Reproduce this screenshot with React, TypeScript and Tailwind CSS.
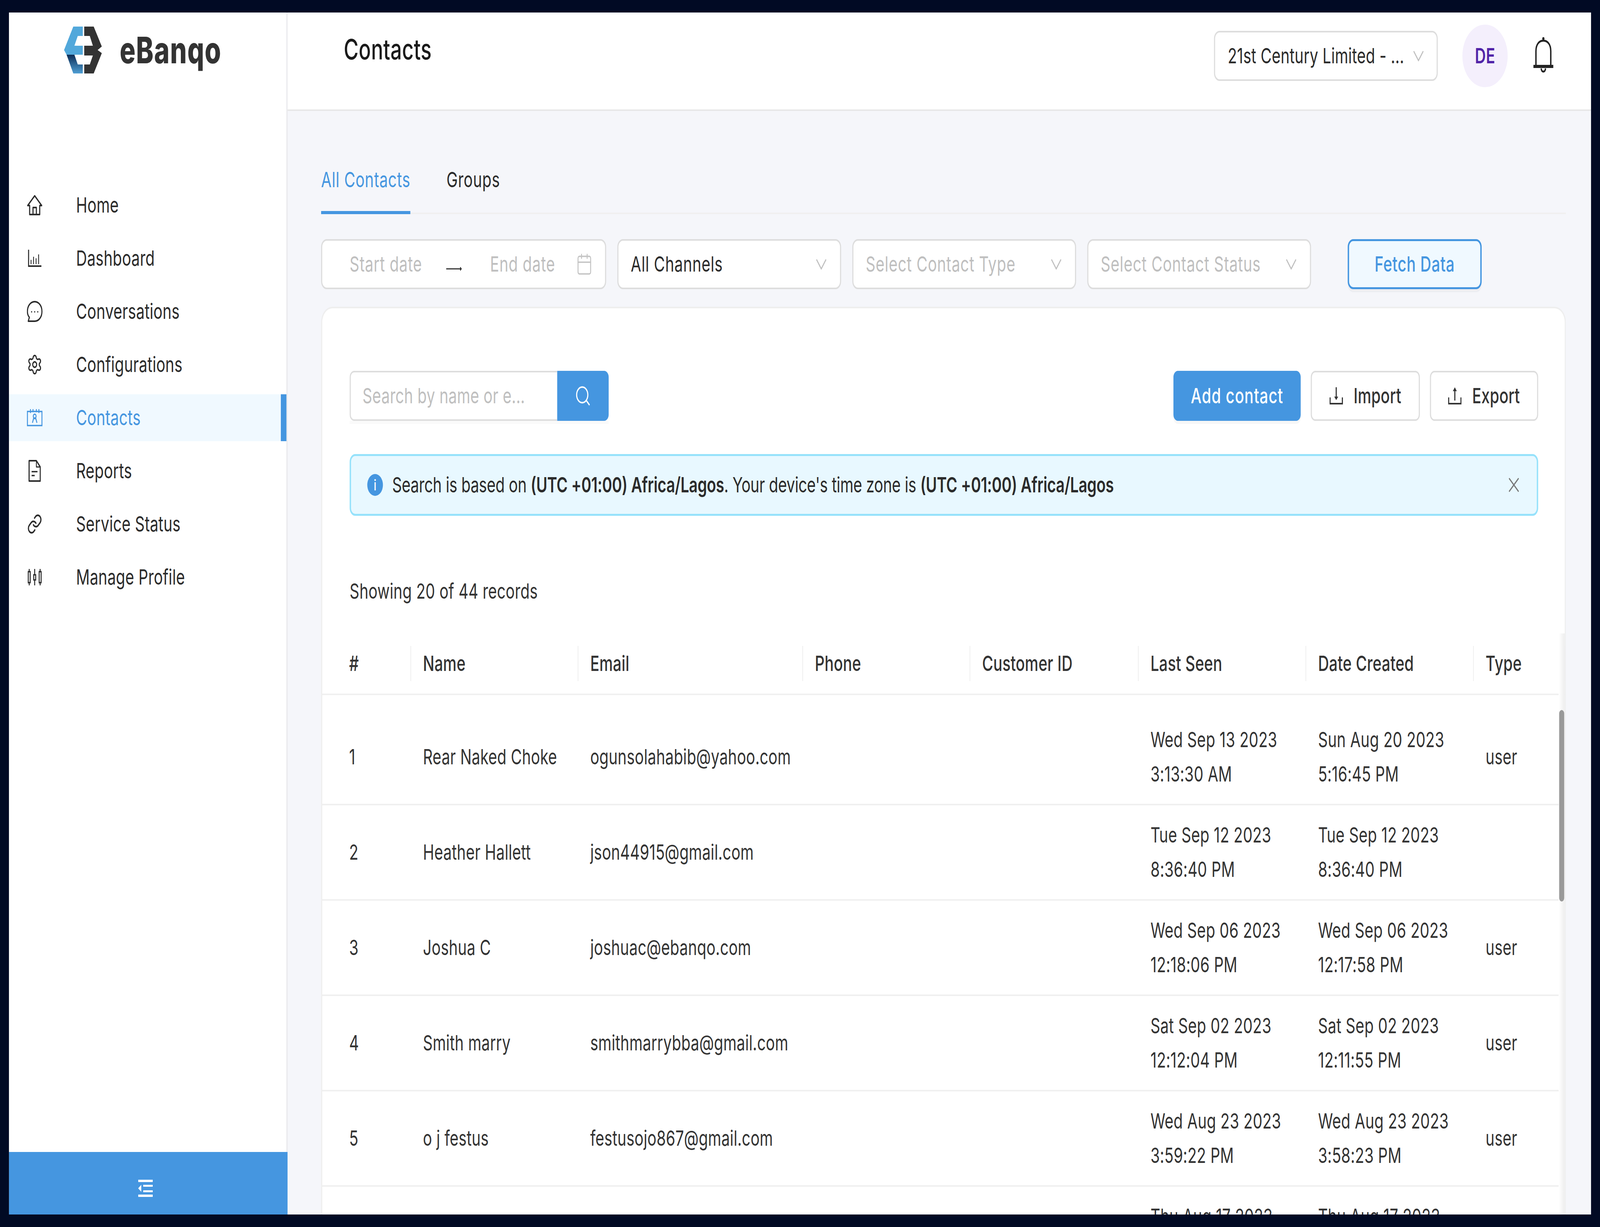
import React from "react";
import { Calendar, Link, Search, Settings, X } from "lucide-react";

const font = { fontFamily: '"Inter", "Liberation Sans", sans-serif' };

const HomeIcon = () => (
  <svg viewBox="0 0 56 54" className="h-[54px] w-[56px]" fill="none" stroke="currentColor" strokeWidth="4" strokeLinejoin="round">
    <path d="M28 3 L53 28 H46 V51 H10 V28 H3 Z" />
    <path d="M22 51 V33 H34 V51" />
  </svg>
);

const ChartIcon = () => (
  <svg viewBox="0 0 48 44" className="h-[44px] w-[48px]" fill="none" stroke="currentColor" strokeWidth="3">
    <path d="M2 0 V42 H48" strokeWidth="4" />
    <path d="M11 26 V37 M20 18 V37 M29 22 V37 M38 12 V37" />
  </svg>
);

const ChatIcon = () => (
  <svg viewBox="0 0 56 54" className="h-[54px] w-[56px]" fill="none" stroke="currentColor" strokeWidth="4">
    <path d="M28 2 C43 2 54 13 54 27 C54 41 43 52 28 52 H5 L9 42 C4 38 2 32 2 27 C2 13 13 2 28 2 Z" strokeLinejoin="round" />
    <circle cx="17" cy="28" r="2" fill="currentColor" stroke="none" />
    <circle cx="28" cy="28" r="2" fill="currentColor" stroke="none" />
    <circle cx="39" cy="28" r="2" fill="currentColor" stroke="none" />
  </svg>
);

const ContactsIcon = () => (
  <svg viewBox="0 0 56 44" className="h-[44px] w-[56px]" fill="none" stroke="currentColor" strokeWidth="3.5">
    <path d="M2 6 H54 V42 H2 Z" />
    <path d="M13 0 V10 M22 0 V8 M34 0 V8 M43 0 V10" />
    <circle cx="28" cy="18" r="5" />
    <path d="M20 35 L24 24 H32 L36 35" />
  </svg>
);

const FileIcon = () => (
  <svg viewBox="0 0 44 56" className="h-[56px] w-[44px]" fill="none" stroke="currentColor" strokeWidth="4" strokeLinejoin="round">
    <path d="M2 2 H28 L42 18 V54 H2 Z" />
    <path d="M28 2 V18 H42" strokeWidth="3" />
    <path d="M11 30 H32 M11 40 H22" strokeWidth="3.5" />
  </svg>
);

const SlidersIcon = () => (
  <svg viewBox="0 0 52 42" className="h-[42px] w-[52px]" fill="none" stroke="currentColor" strokeWidth="3.5">
    <rect x="3" y="7" width="7" height="28" />
    <path d="M6.5 0 V7 M6.5 35 V42" />
    <rect x="22.5" y="15" width="7" height="13" />
    <path d="M26 0 V15 M26 28 V42" />
    <rect x="42" y="7" width="7" height="28" />
    <path d="M45.5 0 V7 M45.5 35 V42" />
  </svg>
);

const Chevron = ({ color = "#bfbfbf" }: { color?: string }) => (
  <svg viewBox="0 0 38 28" className="h-[28px] w-[38px]" fill="none" stroke={color} strokeWidth="3.5">
    <path d="M2 2 L19 26 L36 2" />
  </svg>
);

const Logo = () => (
  <svg viewBox="0 0 136 120" className="h-[120px] w-[136px]">
    <defs>
      <linearGradient id="logoFade" x1="0" y1="0" x2="0" y2="1">
        <stop offset="0" stopColor="#0d2c55" />
        <stop offset="1" stopColor="#4f9fd4" />
      </linearGradient>
    </defs>
    <polygon points="33,0 67,0 67,24 49,24 37,49 67,49 67,72 9,72 0,60" fill="#52a8db" />
    <polygon points="9,72 37,72 49,97 67,97 67,120 33,120" fill="url(#logoFade)" />
    <polygon points="72,0 106,0 135,51 120,60 135,68 106,120 72,120 72,97 92,97 103,74 72,74 72,49 103,49 92,24 72,24" fill="#333333" />
  </svg>
);

const CollapseIcon = () => (
  <svg viewBox="0 0 52 44" className="h-[44px] w-[52px]" fill="white">
    <rect x="0" y="0" width="52" height="6" />
    <rect x="18" y="13" width="34" height="5" />
    <rect x="18" y="27" width="34" height="5" />
    <rect x="0" y="38" width="52" height="6" />
    <polygon points="0,22 11,13 11,31" />
  </svg>
);

const BellIcon = () => (
  <svg viewBox="0 0 73 95" className="h-[95px] w-[73px]" fill="none" stroke="#222222" strokeWidth="5">
    <circle cx="36.5" cy="6" r="4" fill="#222222" stroke="none" />
    <path d="M10 76 V38 C10 20 22 11 36.5 11 C51 11 63 20 63 38 V76" />
    <path d="M1 77 H72" strokeWidth="8" />
    <path d="M29 82 C29 93 44 93 44 82" />
  </svg>
);

const DownloadIcon = () => (
  <svg viewBox="0 0 48 44" className="h-[44px] w-[48px]" fill="none" stroke="#333333" strokeWidth="4">
    <path d="M2 26 V42 H46 V26" />
    <path d="M24 0 V28" />
    <polygon points="17,24 31,24 24,33" fill="#333333" stroke="none" />
  </svg>
);

const UploadIcon = () => (
  <svg viewBox="0 0 48 44" className="h-[44px] w-[48px]" fill="none" stroke="#333333" strokeWidth="4">
    <path d="M2 26 V42 H46 V26" />
    <path d="M24 6 V34" />
    <polygon points="17,10 31,10 24,0" fill="#333333" stroke="none" />
  </svg>
);

const navItems = [
  { label: "Home", icon: <HomeIcon /> },
  { label: "Dashboard", icon: <ChartIcon /> },
  { label: "Conversations", icon: <ChatIcon /> },
  { label: "Configurations", icon: <Settings className="h-[60px] w-[60px]" strokeWidth={1.7} /> },
  { label: "Contacts", icon: <ContactsIcon />, active: true },
  { label: "Reports", icon: <FileIcon /> },
  { label: "Service Status", icon: <Link className="h-[54px] w-[54px]" strokeWidth={1.9} /> },
  { label: "Manage Profile", icon: <SlidersIcon /> },
];

const columns = ["#", "Name", "Email", "Phone", "Customer ID", "Last Seen", "Date Created", "Type"];

const rows = [
  ["1", "Rear Naked Choke", "ogunsolahabib@yahoo.com", "Wed Sep 13 2023", "3:13:30 AM", "Sun Aug 20 2023", "5:16:45 PM", "user"],
  ["2", "Heather Hallett", "json44915@gmail.com", "Tue Sep 12 2023", "8:36:40 PM", "Tue Sep 12 2023", "8:36:40 PM", ""],
  ["3", "Joshua C", "joshuac@ebanqo.com", "Wed Sep 06 2023", "12:18:06 PM", "Wed Sep 06 2023", "12:17:58 PM", "user"],
  ["4", "Smith marry", "smithmarrybba@gmail.com", "Sat Sep 02 2023", "12:12:04 PM", "Sat Sep 02 2023", "12:11:55 PM", "user"],
  ["5", "o j festus", "festusojo867@gmail.com", "Wed Aug 23 2023", "3:59:22 PM", "Wed Aug 23 2023", "3:58:23 PM", "user"],
  ["6", "", "", "Thu Aug 17 2023", "", "Thu Aug 17 2023", "", ""],
];

const gridCols = "grid grid-cols-[318px_598px_803px_598px_602px_599px_599px_1fr]";

const SelectBox = ({ text, muted }: { text: string; muted?: boolean }) => (
  <div className="flex h-[128px] w-[800px] items-center justify-between rounded-[20px] border-[4px] border-[#dddddd] bg-white pl-[44px] pr-[48px] tracking-[1px]">
    <span className={muted ? "text-[#bfbfbf]" : "text-[#2b2b2b]"}>{text}</span>
    <Chevron />
  </div>
);

export default function App() {
  // The design is 5720x3140. The browser may clamp its window (seen: 4096 wide),
  // so fit the design to whatever window we really got. Scale is 1 at full size.
  const fit = `scale(${window.innerWidth / 5720}, ${window.innerHeight / 3140})`;

  return (
    <div className="h-screen w-screen overflow-hidden">
      <div
        style={{ ...font, transform: fit }}
        className="h-[3140px] w-[5720px] origin-top-left bg-[#010a24] p-[32px] text-[54px] leading-[80px] tracking-[0.3px] text-[#333333]"
      >
        <div className="flex h-full overflow-hidden bg-[#f5f6fa]">
          {/* Sidebar */}
          <aside className="flex w-[996px] shrink-0 flex-col bg-white">
            <div className="flex-1 border-r-[4px] border-[#e8e8ec] pt-[36px]">
              <div className="ml-[197px] flex items-start gap-[63px]">
                <Logo />
                <span className="mt-[4px] text-[94px] font-extrabold leading-[112px] tracking-[2px] text-[#333333]">eBanqo</span>
              </div>
              <nav className="mt-[277px] flex flex-col gap-[16px]">
                {navItems.map((item) => (
                  <div
                    key={item.label}
                    className={
                      item.active
                        ? "flex h-[120px] items-center border-r-[20px] border-[#4596e0] bg-[#f0f9ff] text-[#4596e0]"
                        : "flex h-[120px] items-center text-[#2b2b2b]"
                    }
                  >
                    <div className="ml-[64px] flex w-[56px] justify-center">{item.icon}</div>
                    <span className="ml-[120px]">{item.label}</span>
                  </div>
                ))}
              </nav>
            </div>
            <div className="flex h-[160px] items-center justify-center bg-[#4596e0] pr-[20px] pt-[26px]">
              <CollapseIcon />
            </div>
          </aside>

          <div className="flex min-w-0 flex-1 flex-col">
            {/* Header */}
            <header className="flex h-[252px] shrink-0 items-start justify-between border-b-[4px] border-[#e8e8e8] bg-white pl-[201px] pr-[134px]">
              <h1 className="mt-[58px] text-[72px] font-medium leading-[72px] tracking-[0.6px] text-[#1a1a1a]">Contacts</h1>
              <div className="mt-[31px] flex items-center">
                <div className="flex h-[128px] w-[800px] items-center justify-between rounded-[20px] border-[4px] border-[#dddddd] pl-[45px] pr-[46px] text-[#2b2b2b]">
                  <span>21st Century Limited - ...</span>
                  <Chevron />
                </div>
                <div className="ml-[88px] flex h-[160px] w-[162px] items-center justify-center rounded-full bg-[#f4effc] font-semibold text-[#5224a8]">
                  DE
                </div>
                <div className="ml-[91px] -mt-[6px]">
                  <BellIcon />
                </div>
              </div>
            </header>

            {/* Main */}
            <main className="flex min-h-0 flex-1 flex-col pl-[120px] pr-[90px] pt-[140px]">
              <div className="flex gap-[129px] border-b-[4px] border-[#f0f0f0] tracking-[1px]">
                <div className="-mb-[4px] border-b-[8px] border-[#4596e0] pb-[44px] leading-[72px] text-[#4596e0]">All Contacts</div>
                <div className="pb-[44px] leading-[72px] text-[#2b2b2b]">Groups</div>
              </div>

              <div className="mt-[64px] flex items-center gap-[40px]">
                <div className="flex h-[128px] w-[1019px] items-center rounded-[20px] border-[4px] border-[#dddddd] bg-white pl-[98px] text-[#bfbfbf]">
                  <span className="w-[345px] tracking-[1px]">Start date</span>
                  <svg viewBox="0 0 56 12" className="mt-[24px] h-[12px] w-[56px]" fill="none" stroke="#333333" strokeWidth="3">
                    <path d="M0 6 H54 M50 2 L54 6 L50 10" />
                  </svg>
                  <span className="ml-[101px] w-[307px] tracking-[1px]">End date</span>
                  <Calendar className="h-[60px] w-[60px] text-[#c4c4c4]" strokeWidth={1.4} />
                </div>
                <SelectBox text="All Channels" />
                <SelectBox text="Select Contact Type" muted />
                <SelectBox text="Select Contact Status" muted />
                <button className="ml-[91px] h-[128px] w-[479px] rounded-[20px] border-[5px] border-[#4596e0] bg-[#f0f9ff] font-medium tracking-[1px] text-[#4596e0] shadow-[0_8px_0_rgba(0,0,0,0.03)]">
                  Fetch Data
                </button>
              </div>

              {/* Card */}
              <section className="mt-[45px] flex min-h-0 flex-1 flex-col overflow-hidden rounded-t-[40px] border-[4px] border-b-0 border-[#eeeeee] bg-white">
                <div className="pl-[98px] pr-[95px] pt-[160px]">
                  <div className="flex items-center justify-between">
                    <div className="flex h-[128px] w-[926px] shadow-[0_8px_0_rgba(0,0,0,0.02)]">
                      <div className="flex flex-1 items-center rounded-l-[16px] border-[4px] border-r-0 border-[#dddddd] pl-[42px] text-[#bfbfbf]">
                        Search by name or e...
                      </div>
                      <div className="flex w-[184px] items-center justify-center rounded-r-[16px] bg-[#4596e0] text-white">
                        <Search className="h-[60px] w-[60px]" strokeWidth={1.6} />
                      </div>
                    </div>
                    <div className="flex items-center gap-[36px]">
                      <button className="h-[128px] w-[455px] rounded-[16px] bg-[#4596e0] font-medium tracking-[1.5px] text-white shadow-[0_8px_0_rgba(0,0,0,0.03)]">
                        Add contact
                      </button>
                      <button className="flex h-[128px] w-[390px] items-center gap-[38px] rounded-[16px] border-[4px] border-[#dddddd] pl-[63px] font-medium text-[#333333]">
                        <DownloadIcon />
                        Import
                      </button>
                      <button className="flex h-[128px] w-[387px] items-center gap-[38px] rounded-[16px] border-[4px] border-[#dddddd] pl-[61px] font-medium text-[#333333]">
                        <UploadIcon />
                        Export
                      </button>
                    </div>
                  </div>

                  <div className="mt-[85px] flex h-[158px] items-center rounded-[20px] border-[5px] border-[#96e2fb] bg-[#e8f8ff] pl-[58px] pr-[50px] text-[#2b2b2b]">
                    <div className="flex h-[56px] w-[56px] items-center justify-center rounded-full bg-[#4596e0] text-[38px] font-medium leading-none text-white">
                      i
                    </div>
                    <p className="ml-[33px] flex-1 tracking-[-0.4px]">
                      Search is based on <b className="font-semibold">(UTC +01:00) Africa/Lagos</b>. Your device's time zone is{" "}
                      <b className="font-semibold">(UTC +01:00) Africa/Lagos</b>
                    </p>
                    <X className="h-[64px] w-[64px] text-[#777777]" strokeWidth={1.4} />
                  </div>

                  <p className="mt-[153px]">Showing 20 of 44 records</p>
                </div>

                {/* Table */}
                <div className="relative mt-[68px] min-h-0 flex-1">
                  <div className={`${gridCols} h-[158px] items-center border-b-[4px] border-[#f0f0f0]`}>
                    {columns.map((col, i) => (
                      <div
                        key={col}
                        className={
                          i === 0
                            ? "flex h-[90px] items-center border-r-[3px] border-[#f0f0f0] pl-[96px] font-medium"
                            : "flex h-[90px] items-center border-r-[3px] border-[#f0f0f0] pl-[42px] font-medium"
                        }
                      >
                        {col}
                      </div>
                    ))}
                  </div>
                  <div className="w-[4424px] pt-[38px]">
                    {rows.map((row) => (
                      <div key={row[0]} className={`${gridCols} items-center border-b-[4px] border-[#f0f0f0] py-[32px] leading-[88px]`}>
                        <div className="pl-[96px]">{row[0]}</div>
                        <div className="pl-[42px]">{row[1]}</div>
                        <div className="pl-[42px]">{row[2]}</div>
                        <div />
                        <div />
                        <div className="pl-[42px]">
                          <div>{row[3]}</div>
                          <div className="min-h-[88px]">{row[4]}</div>
                        </div>
                        <div className="pl-[42px]">
                          <div>{row[5]}</div>
                          <div className="min-h-[88px]">{row[6]}</div>
                        </div>
                        <div className="pl-[42px]">{row[7]}</div>
                      </div>
                    ))}
                  </div>
                  {/* scrollbar */}
                  <div className="absolute bottom-0 right-0 top-0 w-[22px] bg-gradient-to-r from-[#ffffff] to-[#eeeeee]">
                    <div className="ml-[2px] mt-[196px] h-[490px] w-[18px] rounded-full bg-[#999999]" />
                  </div>
                </div>
              </section>
            </main>
          </div>
        </div>
      </div>
    </div>
  );
}
